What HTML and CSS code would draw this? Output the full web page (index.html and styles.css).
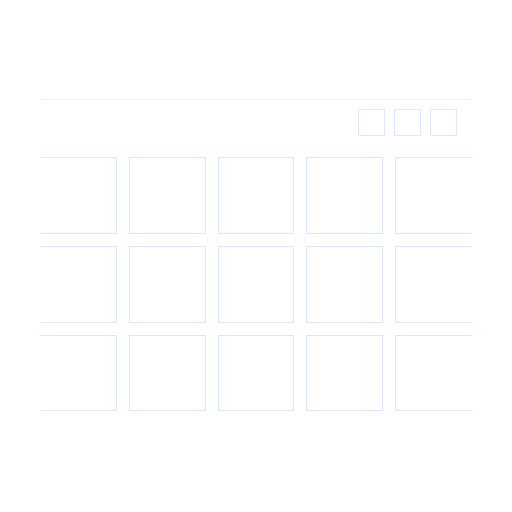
FILE: index.html
```html
<!DOCTYPE html>
<html>
<head>
<meta charset="utf-8">
<link rel="stylesheet" href="styles.css">
</head>
<body>
<div class="panel">
  <div class="toolbar">
    <div class="tool"></div>
    <div class="tool"></div>
    <div class="tool"></div>
  </div>
  <div class="grid-clip">
    <div class="grid">
      <div class="tile"></div><div class="tile"></div><div class="tile"></div><div class="tile"></div><div class="tile"></div>
      <div class="tile"></div><div class="tile"></div><div class="tile"></div><div class="tile"></div><div class="tile"></div>
      <div class="tile"></div><div class="tile"></div><div class="tile"></div><div class="tile"></div><div class="tile"></div>
    </div>
  </div>
</div>
</body>
</html>
```

FILE: styles.css
```css
html, body {
  margin: 0;
  padding: 0;
  background: #ffffff;
  font-family: "Liberation Sans", Arial, sans-serif;
}
body {
  padding: 99px 41px 0 41px;
}
.panel {
  width: 430px;
  border-top: 1px solid #eff2f7;
}
.toolbar {
  display: flex;
  justify-content: flex-end;
  gap: 9px;
  padding: 9px 14px 9px 0;
  border-bottom: 1px solid #f9fafc;
}
.tool {
  width: 25px;
  height: 25px;
  border: 1px solid #dfe8f9;
  background: #fff;
}
.grid-clip {
  margin-top: 11px;
  width: 430px;
  overflow: hidden;
}
.grid {
  margin-left: -1px;
  width: 432px;
  display: grid;
  grid-template-columns: repeat(5, 1fr);
  gap: 12px;
}
.tile {
  aspect-ratio: 1 / 1;
  border: 1px solid #d9e6fb;
  background: #fff;
}
```
